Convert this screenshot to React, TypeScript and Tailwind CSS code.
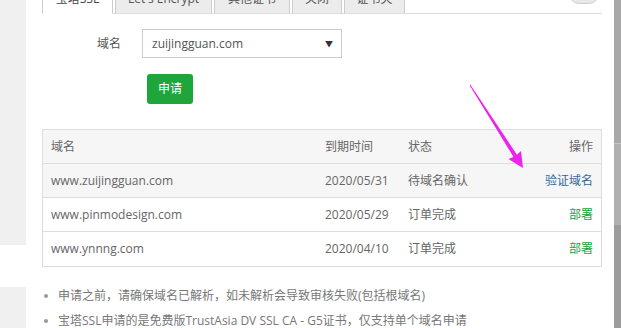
import React from 'react';

const tabs = [
  { label: '宝塔SSL', w: 'w-[71px]', active: true },
  { label: "Let's Encrypt", w: 'w-[97px]', active: false },
  { label: '其他证书', w: 'w-[76px]', active: false },
  { label: '关闭', w: 'w-[50px]', active: false },
  { label: '证书夹', w: 'w-[61px]', active: false },
];

const rows = [
  { domain: 'www.zuijingguan.com', date: '2020/05/31', status: '待域名确认', action: '验证域名', verify: true },
  { domain: 'www.pinmodesign.com', date: '2020/05/29', status: '订单完成', action: '部署', verify: false },
  { domain: 'www.ynnng.com', date: '2020/04/10', status: '订单完成', action: '部署', verify: false },
];

const notes = [
  '申请之前，请确保域名已解析，如未解析会导致审核失败(包括根域名)',
  '宝塔SSL申请的是免费版TrustAsia DV SSL CA - G5证书，仅支持单个域名申请',
];

export default function App() {
  return (
    <div className="relative flex w-[621px] h-[328px] overflow-hidden bg-white text-[12px] text-[#666] font-['Open_Sans','Noto_Sans_CJK_SC',sans-serif]">
      {/* page behind the dialog, left edge */}
      <div className="flex flex-col w-[26px] shrink-0">
        <div className="h-[245px] bg-[#f0f0f0]" />
        <div className="h-[42px] bg-white" />
        <div className="flex-1 bg-[#f0f0f0]" />
      </div>

      {/* dialog body */}
      <div className="flex-1 flex flex-col pl-[16px] pr-[12px]">
        {/* tab bar, top cut off */}
        <div className="flex items-start h-[31px] -mt-[17px] border-b border-[#ddd]">
          {tabs.map((t, i) => (
            <div
              key={t.label}
              className={`${t.w} h-[31px] flex items-center justify-center border border-[#ccc] text-[12px] ${
                i > 0 ? 'ml-[2px]' : ''
              } ${t.active ? 'bg-white border-b-white text-[#444]' : 'bg-[#ececec] border-b-[#ddd] text-[#555]'}`}
            >
              {t.label}
            </div>
          ))}
          <div className="ml-auto mr-[3px] mt-[1px] w-[30px] h-[20px] rounded-full border border-[#cfcfcf] bg-[#e8e8e8]" />
        </div>

        {/* domain select */}
        <div className="flex items-center mt-[15px] h-[29px]">
          <div className="w-[100px] text-right pr-[21px] text-[12px] text-[#555]">域名</div>
          <div className="w-[200px] h-[29px] border border-[#ccc] flex items-center justify-between pl-[9px] pr-[8px] text-[12px] text-[#555]">
            <span>zuijingguan.com</span>
            <span className="text-[8px] text-[#333]">▼</span>
          </div>
        </div>

        {/* apply button */}
        <div className="mt-[16px] ml-[105px]">
          <button className="w-[46px] h-[30px] rounded-[3px] bg-[#20a53a] text-white text-[12px]">申请</button>
        </div>

        {/* certificate table */}
        <div className="mt-[25px] border border-[#ddd]">
          <div className="flex items-center h-[34px] px-[8px] bg-[#f6f6f6] border-b border-[#ddd]">
            <div className="w-[274px]">域名</div>
            <div className="w-[83px]">到期时间</div>
            <div className="flex-1">状态</div>
            <div className="text-right">操作</div>
          </div>
          {rows.map((r, i) => (
            <div
              key={r.domain}
              className={`flex items-center h-[34px] px-[8px] ${i < rows.length - 1 ? 'border-b border-[#ddd]' : ''} ${
                i === 0 ? 'bg-[#f6f6f6]' : 'bg-white'
              }`}
            >
              <div className="w-[274px]">{r.domain}</div>
              <div className="w-[83px]">{r.date}</div>
              <div className="flex-1">{r.status}</div>
              <div className={`text-right ${r.verify ? 'text-[#35699a]' : 'text-[#20a53a]'}`}>{r.action}</div>
            </div>
          ))}
        </div>

        {/* notes */}
        <ul className="mt-[16px] text-[#777]">
          {notes.map((n) => (
            <li key={n} className="flex items-center h-[25px]">
              <span className="w-[4px] h-[4px] rounded-full bg-[#999] ml-[2px] mr-[10px]" />
              <span>{n}</span>
            </li>
          ))}
        </ul>
      </div>

      {/* scrollbar edge on the right */}
      <div className="flex flex-col w-[7px] shrink-0 bg-[#a3a3a3]">
        <div className="h-[144px] bg-[#a8a8a8] border-b border-[#c4c4c4]" />
        <div className="h-[81px] bg-[#b0b0b0]" />
        <div className="flex-1 bg-[#9c9c9c]" />
      </div>

      {/* annotation arrow */}
      <svg className="absolute inset-0 pointer-events-none" width="621" height="328" viewBox="0 0 621 328">
        <polygon
          points="469.6,85.3 513.5,156.9 508.4,159 523,168 521,151 516.9,154.7 470.4,84.7"
          fill="#ee22ee"
        />
      </svg>
    </div>
  );
}
